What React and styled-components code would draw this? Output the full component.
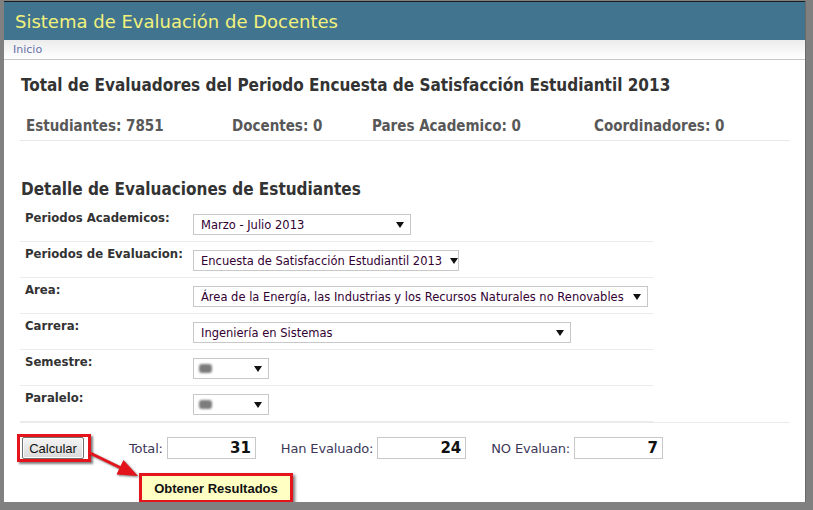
import styled, { createGlobalStyle } from "styled-components";

const GlobalStyle = createGlobalStyle`
  html, body {
    margin: 0;
    padding: 0;
    background: #808080;
  }
  body {
    font-family: "DejaVu Sans", Verdana, sans-serif;
  }
`;

const Window = styled.div`
  position: relative;
  margin: 1px 8px 0 4px;
  height: 501px;
  box-sizing: border-box;
  border-top: 1px solid #1b1b1b;
  background: #fff;
  overflow: hidden;
  box-shadow: 1px 0 0 #6a6a6a;
`;

const Header = styled.div`
  height: 38px;
  display: flex;
  align-items: center;
  padding-left: 11px;
  background: #41748f;
  color: #f2f27c;
  font-size: 18px;
`;

const Nav = styled.div`
  height: 19px;
  line-height: 19px;
  padding-left: 9px;
  border-bottom: 1px solid #c8c8c8;
  background: linear-gradient(#ececec, #ffffff);
  font-size: 11px;
  color: #6672aa;
`;

const Content = styled.div`
  padding: 0 15px 0 16px;
`;

const Heading = styled.h2`
  margin: ${(p) => p.$top}px 0 0 1px;
  font-family: "DejaVu Sans Condensed", "DejaVu Sans", sans-serif;
  font-size: 17px;
  font-weight: bold;
  line-height: 22px;
  color: #333;
`;

const StatsRow = styled.div`
  display: grid;
  grid-template-columns: 206px 140px 222px 1fr;
  height: 29px;
  margin-top: 15px;
  border-bottom: 1px solid #e8e8e8;
  align-items: center;
`;

const Stat = styled.div`
  padding-left: 6px;
  font-family: "DejaVu Sans Condensed", "DejaVu Sans", sans-serif;
  font-size: 15px;
  font-weight: bold;
  color: #585858;
`;

const FormTable = styled.div`
  width: 633px;
  margin-top: 6px;
`;

const FormRow = styled.div`
  display: grid;
  grid-template-columns: 173px 1fr;
  height: 35px;
  border-bottom: 1px solid #ebebeb;
`;

const Label = styled.div`
  padding: 4px 0 0 5px;
  font-family: "DejaVu Sans Condensed", "DejaVu Sans", sans-serif;
  font-size: 13px;
  font-weight: bold;
  line-height: 16px;
  color: #333;
`;

const Cell = styled.div`
  padding-top: 8px;
`;

const SelectBox = styled.div`
  width: ${(p) => p.$width}px;
  height: 21px;
  box-sizing: border-box;
  border: 1px solid #c8c8c8;
  display: flex;
  align-items: center;
  justify-content: space-between;
  padding: 0 6px 0 7px;
  font-size: 11.5px;
  color: #330033;
  white-space: nowrap;
`;

const Caret = styled.span`
  width: 0;
  height: 0;
  margin-left: 8px;
  border-left: 4px solid transparent;
  border-right: 4px solid transparent;
  border-top: 6px solid #111;
`;

const Chip = styled.span`
  width: 13px;
  height: 9px;
  margin-left: -2px;
  border-radius: 3px;
  background: #7c7c7c;
  filter: blur(0.8px);
`;

const Divider = styled.div`
  height: 1px;
  background: #ebebeb;
`;

const BottomRow = styled.div`
  display: flex;
  align-items: center;
  margin-top: 14px;
`;

const Highlight = styled.span`
  position: relative;
  display: inline-flex;
  margin-left: 2px;

  &::after {
    content: "";
    position: absolute;
    inset: -3px -7px -3px -5px;
    border: 3px solid #e4141c;
    box-shadow: 2px 2px 2px rgba(0, 0, 0, 0.5);
    pointer-events: none;
  }
`;

const Button = styled.button`
  width: 62px;
  height: 22px;
  padding: 0;
  border: 1px solid #707070;
  border-radius: 2px;
  background: linear-gradient(#f4f4f4, #dadada);
  box-shadow: inset 0 0 0 1px #fbfbfb;
  font-family: "Liberation Sans", Arial, sans-serif;
  font-size: 13px;
  color: #111;
`;

const Field = styled.label`
  display: flex;
  align-items: center;
  gap: 4px;
  margin-left: ${(p) => p.$gap}px;
  font-size: 13px;
  letter-spacing: -0.15px;
  color: #3c3858;
`;

const NumberBox = styled.input`
  width: 89px;
  height: 22px;
  box-sizing: border-box;
  border: 1px solid #c8c8c8;
  padding: 0 4px 0 0;
  text-align: right;
  font-family: "DejaVu Sans", Verdana, sans-serif;
  font-size: 15px;
  font-weight: bold;
  color: #111;
  background: #fff;
`;

const Arrow = styled.svg`
  position: absolute;
  left: 80px;
  top: 444px;
  overflow: visible;
  filter: drop-shadow(1.5px 1.5px 1px rgba(0, 0, 0, 0.55));
`;

const Callout = styled.div`
  position: absolute;
  left: 135px;
  top: 471px;
  width: 154px;
  height: 30px;
  box-sizing: border-box;
  border: 3px solid #e4141c;
  background: #ffffc4;
  box-shadow: 2px 2px 3px rgba(0, 0, 0, 0.55);
  display: flex;
  align-items: center;
  justify-content: center;
  font-family: "Liberation Sans", Arial, sans-serif;
  font-size: 13px;
  font-weight: bold;
  color: #111;
`;

const stats = [
  "Estudiantes: 7851",
  "Docentes: 0",
  "Pares Academico: 0",
  "Coordinadores: 0",
];

const rows = [
  { label: "Periodos Academicos:", value: "Marzo - Julio 2013", width: 218 },
  {
    label: "Periodos de Evaluacion:",
    value: "Encuesta de Satisfacción Estudiantil 2013",
    width: 266,
  },
  {
    label: "Area:",
    value:
      "Área de la Energía, las Industrias y los Recursos Naturales no Renovables",
    width: 455,
  },
  { label: "Carrera:", value: "Ingeniería en Sistemas", width: 378 },
  { label: "Semestre:", chip: true, width: 76 },
  { label: "Paralelo:", chip: true, width: 76 },
];

const totals = [
  { label: "Total:", value: "31", gap: 45 },
  { label: "Han Evaluado:", value: "24", gap: 25 },
  { label: "NO Evaluan:", value: "7", gap: 25 },
];

export default function App() {
  return (
    <>
      <GlobalStyle />
      <Window>
        <Header>Sistema de Evaluación de Docentes</Header>
        <Nav>Inicio</Nav>
        <Content>
          <Heading $top={14}>
            Total de Evaluadores del Periodo Encuesta de Satisfacción
            Estudiantil 2013
          </Heading>
          <StatsRow>
            {stats.map((s) => (
              <Stat key={s}>{s}</Stat>
            ))}
          </StatsRow>

          <Heading $top={37}>Detalle de Evaluaciones de Estudiantes</Heading>
          <FormTable>
            {rows.map((r) => (
              <FormRow key={r.label}>
                <Label>{r.label}</Label>
                <Cell>
                  <SelectBox $width={r.width}>
                    {r.chip ? <Chip /> : <span>{r.value}</span>}
                    <Caret />
                  </SelectBox>
                </Cell>
              </FormRow>
            ))}
          </FormTable>
          <Divider />

          <BottomRow>
            <Highlight>
              <Button>Calcular</Button>
            </Highlight>
            {totals.map((t) => (
              <Field key={t.label} $gap={t.gap}>
                {t.label}
                <NumberBox readOnly value={t.value} />
              </Field>
            ))}
          </BottomRow>
        </Content>

        <Arrow width="60" height="40" viewBox="0 0 60 40">
          <line x1="6" y1="7" x2="37" y2="22" stroke="#e4141c" strokeWidth="3" />
          <polygon points="54,30 39.4,14.1 32.5,28.6" fill="#e4141c" />
        </Arrow>
        <Callout>Obtener Resultados</Callout>
      </Window>
    </>
  );
}
